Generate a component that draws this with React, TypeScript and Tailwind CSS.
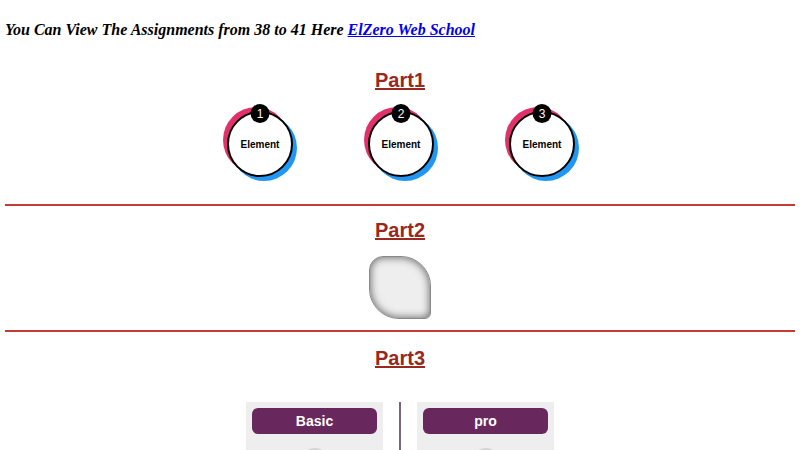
import React from "react";

function Circle({ n }: { n: number }) {
  return (
    <div className="relative w-[66px] h-[66px] rounded-full bg-white border-2 border-black shadow-[-4px_-4px_0_#e2306c,4px_4px_0_#2196f3] flex items-center justify-center font-['Liberation_Sans',Arial,sans-serif]">
      <span className="text-[10px] font-bold text-black">Element</span>
      <div className="absolute top-[-9px] left-1/2 -translate-x-1/2 w-[19px] h-[19px] rounded-full bg-black text-white flex items-center justify-center text-[12px] leading-none">
        {n}
      </div>
    </div>
  );
}

function Heading({ children, className = "" }: { children: React.ReactNode; className?: string }) {
  return (
    <h2
      className={`text-center text-[20px] leading-[24px] font-bold underline text-[#98291f] font-['Liberation_Sans',Arial,sans-serif] ${className}`}
    >
      {children}
    </h2>
  );
}

function Card({ label }: { label: string }) {
  return (
    <div className="w-[137px] h-[80px] bg-[#eeeeee] p-[6px] flex flex-col items-center">
      <div className="shrink-0 w-full h-[26px] rounded-[6px] bg-[#68285e] text-white text-[14px] font-bold flex items-center justify-center font-['Liberation_Sans',Arial,sans-serif]">
        {label}
      </div>
      <div className="mt-[14px] w-[30px] h-[30px] rounded-full bg-[#d4d4d4] shrink-0" />
    </div>
  );
}

export default function App() {
  return (
    <div className="w-[800px] h-[450px] overflow-hidden bg-white px-[5px]">
      <h3 className="mt-[20px] h-[20px] leading-[20px] text-[16px] font-bold italic text-black font-['Liberation_Serif','Times_New_Roman',serif]">
        You Can View The Assignments from 38 to 41 Here{" "}
        <a href="#" className="text-[#0000ee] underline">ElZero Web School</a>
      </h3>

      <Heading className="mt-[28px]">Part1</Heading>
      <div className="mt-[19px] flex justify-center gap-[75px] pl-[2px]">
        <Circle n={1} />
        <Circle n={2} />
        <Circle n={3} />
      </div>
      <div className="mt-[27px] h-[2px] bg-[#c43a35]" />

      <Heading className="mt-[12px]">Part2</Heading>
      <div className="mt-[14px] flex justify-center">
        <div className="w-[62px] h-[63px] bg-[#eeeeee] rounded-[14px_30px_6px_30px] shadow-[inset_0_0_8px_#555] border border-[#888]" />
      </div>
      <div className="mt-[11px] h-[2px] bg-[#c43a35]" />

      <Heading className="mt-[14px]">Part3</Heading>
      <div className="mt-[32px] flex justify-center gap-[16px]">
        <Card label="Basic" />
        <div className="w-[2px] h-[80px] bg-[#7a6678]" />
        <Card label="pro" />
      </div>
    </div>
  );
}
